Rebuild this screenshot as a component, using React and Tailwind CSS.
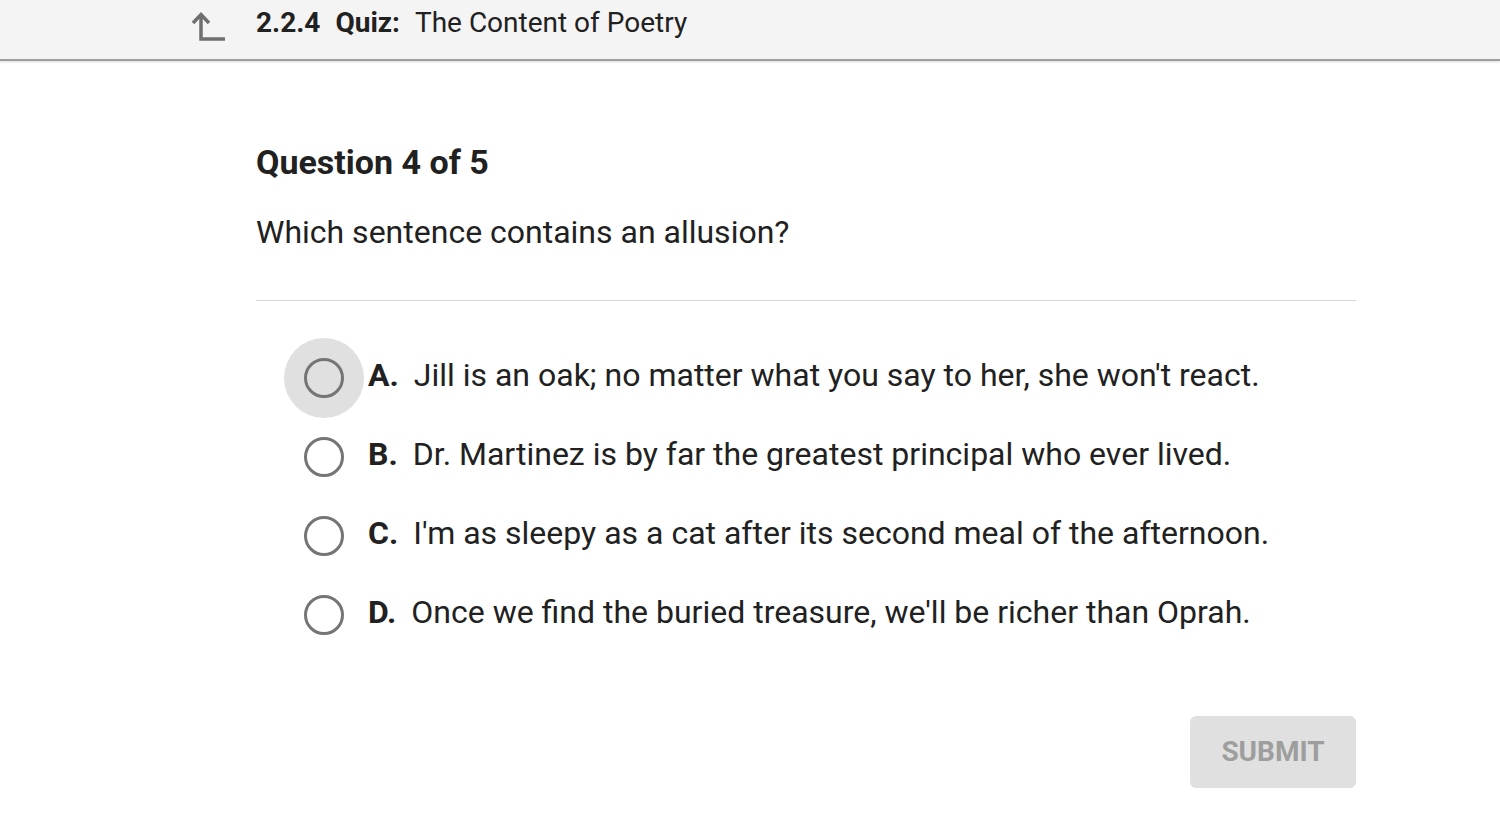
import React, { useState } from 'react';

const options = [
  { letter: 'A.', text: "Jill is an oak; no matter what you say to her, she won't react." },
  { letter: 'B.', text: 'Dr. Martinez is by far the greatest principal who ever lived.' },
  { letter: 'C.', text: "I'm as sleepy as a cat after its second meal of the afternoon." },
  { letter: 'D.', text: "Once we find the buried treasure, we'll be richer than Oprah." },
];

const UpIcon = () => (
  <svg width="36" height="32" viewBox="0 0 36 32" fill="none" stroke="#6f6f6f" strokeWidth="3.5">
    <path d="M3 12 L11 3.5 L19 12" strokeLinejoin="miter" />
    <path d="M11 4 L11 28 L35 28" />
  </svg>
);

export default function App() {
  const [selected, setSelected] = useState(null);

  return (
    <div className="min-h-screen bg-white text-[#212121]" style={{ fontFamily: 'Roboto, "Liberation Sans", sans-serif' }}>
      {/* Header */}
      <div className="h-[61px] bg-[#f4f4f4] border-b-2 border-[#9e9e9e] shadow-[0_1px_2px_rgba(0,0,0,0.15)] flex items-center">
        <div className="ml-[190px] w-[66px] flex items-center -mt-[6px]">
          <UpIcon />
        </div>
        <div className="flex items-center text-[28px] leading-none -mt-[14px]">
          <span className="font-bold">2.2.4</span>
          <span className="font-bold ml-[15px]">Quiz:</span>
          <span className="ml-[15px]">The Content of Poetry</span>
        </div>
      </div>

      {/* Body */}
      <div className="ml-[256px] w-[1100px]">
        <h1 className="mt-[82px] text-[34px] font-bold leading-[38px]">Question 4 of 5</h1>
        <p className="mt-[33px] text-[32px] leading-[36px]">Which sentence contains an allusion?</p>
        <div className="mt-[50px] border-t border-[#d6d6d6]" />

        <div className="mt-[37px] ml-[28px] flex flex-col">
          {options.map((o, i) => (
            <label key={o.letter} className="flex items-center h-[79px] cursor-pointer" onClick={() => setSelected(i)}>
              <span className={`w-[80px] h-[80px] rounded-full flex items-center justify-center ${i === 0 ? 'bg-[#e0e0e0]' : ''}`}>
                <span className="w-[40px] h-[40px] rounded-full border-[3px] border-[#757575] flex items-center justify-center">
                  {selected === i && <span className="w-[20px] h-[20px] rounded-full bg-[#757575]" />}
                </span>
              </span>
              <span className="ml-[4px] text-[32px] leading-none flex -mt-[5px]">
                <span className="font-bold mr-[15px]">{o.letter}</span>
                <span>{o.text}</span>
              </span>
            </label>
          ))}
        </div>

        <div className="flex justify-end mt-[62px]">
          <button className="w-[166px] h-[72px] rounded-[6px] bg-[#e0e0e0] text-[#9e9e9e] text-[28px] font-bold">
            SUBMIT
          </button>
        </div>
      </div>
    </div>
  );
}
